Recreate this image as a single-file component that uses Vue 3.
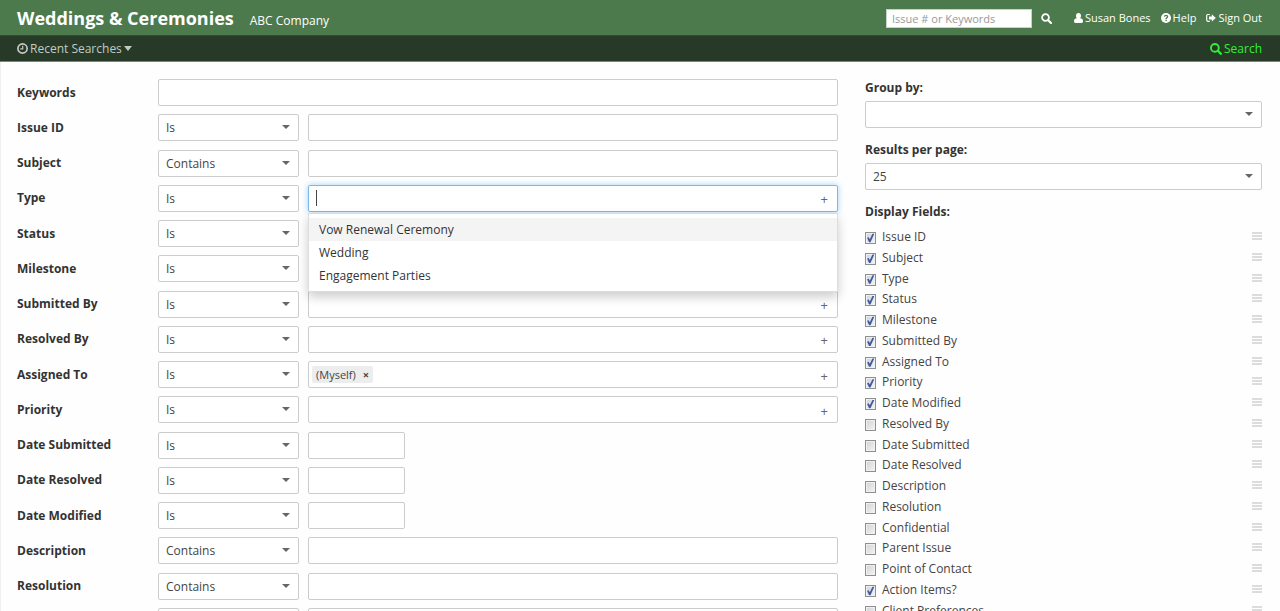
<script setup>
import { ref } from 'vue'

const rows = ref([
  { label: 'Keywords', kind: 'wide' },
  { label: 'Issue ID', op: 'Is', kind: 'text' },
  { label: 'Subject', op: 'Contains', kind: 'text' },
  { label: 'Type', op: 'Is', kind: 'combo', add: true, open: true },
  { label: 'Status', op: 'Is', kind: 'combo', add: true },
  { label: 'Milestone', op: 'Is', kind: 'combo', add: true },
  { label: 'Submitted By', op: 'Is', kind: 'combo', add: true },
  { label: 'Resolved By', op: 'Is', kind: 'combo', add: true },
  { label: 'Assigned To', op: 'Is', kind: 'combo', add: true, tags: ['(Myself)'] },
  { label: 'Priority', op: 'Is', kind: 'combo', add: true },
  { label: 'Date Submitted', op: 'Is', kind: 'date' },
  { label: 'Date Resolved', op: 'Is', kind: 'date' },
  { label: 'Date Modified', op: 'Is', kind: 'date' },
  { label: 'Description', op: 'Contains', kind: 'text' },
  { label: 'Resolution', op: 'Contains', kind: 'text' },
  { label: '', op: '', kind: 'text' },
])

const types = ['Vow Renewal Ceremony', 'Wedding', 'Engagement Parties']

const fields = ref([
  ['Issue ID', true],
  ['Subject', true],
  ['Type', true],
  ['Status', true],
  ['Milestone', true],
  ['Submitted By', true],
  ['Assigned To', true],
  ['Priority', true],
  ['Date Modified', true],
  ['Resolved By', false],
  ['Date Submitted', false],
  ['Date Resolved', false],
  ['Description', false],
  ['Resolution', false],
  ['Confidential', false],
  ['Parent Issue', false],
  ['Point of Contact', false],
  ['Action Items?', true],
  ['Client Preferences', false],
].map(([name, on]) => ({ name, on })))
</script>

<template>
  <div class="page">
    <header class="top">
      <h1>Weddings &amp; Ceremonies</h1>
      <span class="company">ABC Company</span>
      <form class="quick" @submit.prevent>
        <input type="text" placeholder="Issue # or Keywords" aria-label="Issue # or Keywords" />
        <button type="submit" aria-label="Find">
          <svg width="11" height="11" viewBox="0 0 11 11"><circle cx="4.5" cy="4.5" r="3.4" fill="none" stroke="currentColor" stroke-width="1.8" /><path d="M7 7l3 3" stroke="currentColor" stroke-width="2.2" stroke-linecap="round" /></svg>
        </button>
      </form>
      <nav class="links">
        <a href="#">
          <svg width="9" height="10" viewBox="0 0 9 10"><path d="M4.5 0C6 0 7 1.100 7 2.700 7 3.900 6.600 4.800 6 5.300 8 5.500 9 6.300 9 8.300 9 9.400 8.400 10 7.500 10h-6C.6 10 0 9.400 0 8.300 0 6.300 1 5.500 3 5.300 2.400 4.800 2 3.900 2 2.700 2 1.100 3 0 4.500 0z" fill="currentColor" /></svg>
          Susan Bones
        </a>
        <a href="#">
          <svg width="10" height="10" viewBox="0 0 10 10"><circle cx="5" cy="5" r="5" fill="currentColor" /><path d="M3.400 3.700C3.600 2.800 4.200 2.400 5 2.400c.9 0 1.600.5 1.600 1.300C6.600 4.700 5.100 4.800 5.100 6" fill="none" stroke="#4d7a4d" stroke-width="1.300" /><rect x="4.400" y="6.700" width="1.400" height="1.400" fill="#4d7a4d" /></svg>
          Help
        </a>
        <a href="#">
          <svg width="10" height="10" viewBox="0 0 10 10"><path d="M3.800 1.500H1.900Q.7 1.500.7 2.700v4.400q0 1.200 1.200 1.200h1.900" fill="none" stroke="currentColor" stroke-width="1.200" /><path d="M3 3.500h2.800V1.300L9.800 5 5.800 8.600V6.400H3z" fill="currentColor" /></svg>
          Sign Out
        </a>
      </nav>
    </header>

    <nav class="sub">
      <button type="button" class="recent">
        <svg width="11" height="11" viewBox="0 0 11 11"><circle cx="5.500" cy="5.500" r="4.600" fill="none" stroke="currentColor" stroke-width="1.700" /><path d="M5.700 2.800v3.100H3.300" fill="none" stroke="currentColor" stroke-width="1.200" /></svg>
        Recent Searches
        <svg width="8" height="5" viewBox="0 0 8 5"><path d="M0 0h8L4 5z" fill="currentColor" /></svg>
      </button>
      <a href="#" class="search">
        <svg width="12" height="12" viewBox="0 0 12 12"><circle cx="4.900" cy="4.900" r="3.900" fill="none" stroke="currentColor" stroke-width="1.900" /><path d="M7.800 7.800l3 3" stroke="currentColor" stroke-width="2.300" stroke-linecap="round" /></svg>
        Search
      </a>
    </nav>

    <main>
      <form class="criteria" @submit.prevent>
        <div v-for="(row, i) in rows" :key="i" class="row" :class="row.kind">
          <label :for="'value' + i">{{ row.label }}</label>
          <span v-if="row.kind !== 'wide'" class="pick">
            <select :aria-label="row.label + ' condition'">
              <option>{{ row.op }}</option>
            </select>
          </span>
          <div v-if="row.kind === 'combo'" class="box" :class="{ open: row.open }">
            <span v-if="row.open" class="caret"></span>
            <span v-for="tag in row.tags" :key="tag" class="tag">
              {{ tag }}<button type="button" aria-label="Remove">×</button>
            </span>
            <input :id="'value' + i" type="text" />
            <button v-if="row.add" type="button" class="plus" aria-label="Add">+</button>
            <ul v-if="row.open" class="menu" role="listbox">
              <li v-for="(type, n) in types" :key="type" role="option" :class="{ active: n === 0 }">{{ type }}</li>
            </ul>
          </div>
          <input v-else :id="'value' + i" type="text" class="box" />
        </div>
      </form>

      <aside>
        <div class="group">
          <label for="group-by">Group by:</label>
          <span class="pick"><select id="group-by"><option></option></select></span>
        </div>
        <div class="group">
          <label for="per-page">Results per page:</label>
          <span class="pick"><select id="per-page"><option>25</option></select></span>
        </div>
        <h2>Display Fields:</h2>
        <ul class="fields">
          <li v-for="field in fields" :key="field.name">
            <label><input v-model="field.on" type="checkbox" />{{ field.name }}</label>
            <span class="grip"></span>
          </li>
        </ul>
      </aside>
    </main>
  </div>
</template>

<style>
body {
  background: #fefefe;
}
</style>

<style scoped>
* {
  box-sizing: border-box;
}
.page {
  height: 100vh;
  overflow: auto;
  scrollbar-width: none;
  font: 12px/18px "Open Sans", "Noto Sans", sans-serif;
  color: #444;
}
input,
select,
button {
  font: inherit;
  color: inherit;
  margin: 0;
}
button {
  border: 0;
  padding: 0;
  background: none;
}
a {
  color: inherit;
  text-decoration: none;
}
ul {
  list-style: none;
  margin: 0;
  padding: 0;
}
.top {
  display: flex;
  align-items: center;
  height: 35px;
  padding: 0 18px 0 17px;
  background: #4d7a4d;
  color: #fff;
}
h1 {
  margin: 0;
  font-size: 18px;
  line-height: 26px;
}
.company {
  margin: 6px 0 0 16px;
}
.quick {
  display: flex;
  align-items: center;
  gap: 9px;
  margin: 2px 0 0 auto;
}
.quick input {
  width: 146px;
  height: 19px;
  padding: 0 5px;
  border: 1px solid #c5d2c5;
  background: #fff;
  color: #444;
  font-size: 11px;
}
.quick input::placeholder {
  color: #999;
}
.quick button {
  display: flex;
}
.links {
  display: flex;
  gap: 10px;
  margin-left: 22px;
  font-size: 11px;
}
.links a,
.recent,
.search {
  display: flex;
  align-items: center;
  gap: 2px;
}
.sub {
  display: flex;
  align-items: center;
  justify-content: space-between;
  height: 27px;
  padding: 0 18px 0 17px;
  background: #263a27;
  border-top: 1px solid #2f4a30;
  border-bottom: 1px solid #78857a;
  color: #c3cac3;
}
.search {
  color: #33f033;
}
main {
  display: grid;
  grid-template-columns: minmax(0, 821fr) minmax(0, 397fr);
  gap: 27px;
  align-items: start;
  padding: 17px 18px 0 16px;
  border-left: 1px solid #f0f0f0;
}
.criteria {
  display: flex;
  flex-direction: column;
  justify-content: space-between;
  min-height: 556px;
}
.row {
  display: grid;
  grid-template-columns: 141px 141px 1fr;
  align-items: center;
}
.row > label {
  font-weight: bold;
  color: #333;
}
.row > .box {
  margin-left: 9px;
}
.row.wide > .box {
  grid-column: 2 / 4;
  margin-left: 0;
}
.row.date > .box {
  width: 97px;
}
.box,
.pick select {
  height: 27px;
  border: 1px solid #ccc;
  border-radius: 2px;
  background: #fff;
}
.box {
  position: relative;
  display: flex;
  align-items: center;
  padding: 0 9px 0 3px;
}
.box input {
  flex: 1;
  min-width: 0;
  border: 0;
  padding: 0;
  background: none;
  outline: none;
}
.box.open {
  border-color: #7db8ea;
  box-shadow: 0 0 6px #9fd0f5;
}
.caret {
  width: 1px;
  height: 16px;
  margin-left: 4px;
  background: #444;
}
.plus {
  padding-top: 2px;
  font-size: 13px;
  color: #666;
}
.tag {
  display: flex;
  align-items: center;
  gap: 7px;
  height: 17px;
  padding: 0 4px;
  background: #ededed;
  border-radius: 2px;
  font-size: 11px;
}
.tag button {
  font-weight: bold;
}
.menu {
  position: absolute;
  z-index: 2;
  top: 27px;
  left: -1px;
  right: -1px;
  padding: 4px 0;
  border: 1px solid #ddd;
  background: #fff;
  box-shadow: 0 5px 10px rgba(0, 0, 0, 0.2);
}
.menu li {
  padding: 0 10px;
  line-height: 23px;
  color: #333;
}
.menu .active {
  background: #f4f4f4;
}
.pick {
  position: relative;
  display: block;
}
.pick::after {
  content: "";
  position: absolute;
  right: 9px;
  top: 11px;
  border: 4px solid transparent;
  border-top-color: #666;
  border-bottom: 0;
}
.pick select {
  display: block;
  appearance: none;
  width: 100%;
  padding: 1px 7px 0;
}
.group {
  margin-bottom: 13px;
}
.group label,
h2 {
  display: block;
  margin: 0 0 4px;
  font-size: 12px;
  font-weight: bold;
  line-height: 18px;
  color: #333;
}
.fields {
  display: flex;
  flex-direction: column;
  justify-content: space-between;
  min-height: 392px;
  margin-top: 7px;
}
.fields li {
  display: flex;
  justify-content: space-between;
}
.fields label {
  display: flex;
  align-items: center;
  gap: 6px;
}
.fields input {
  appearance: none;
  width: 11px;
  height: 12px;
  margin-top: 2px;
  border: 1px solid #8e8f8f;
  background: linear-gradient(135deg, #cfd2d8, #f4f4f4);
  box-shadow: inset 0 0 0 1px #f0f0f0;
}
.fields input:checked::before {
  content: "";
  display: block;
  width: 9px;
  height: 10px;
  background: #3f5a9e;
  clip-path: polygon(12% 48%, 30% 42%, 42% 62%, 72% 8%, 92% 8%, 50% 92%, 34% 92%);
}
.grip {
  width: 10px;
  height: 8px;
  margin-top: 4px;
  background: repeating-linear-gradient(#dcdcdc 0 2px, transparent 2px 3px);
}
</style>
